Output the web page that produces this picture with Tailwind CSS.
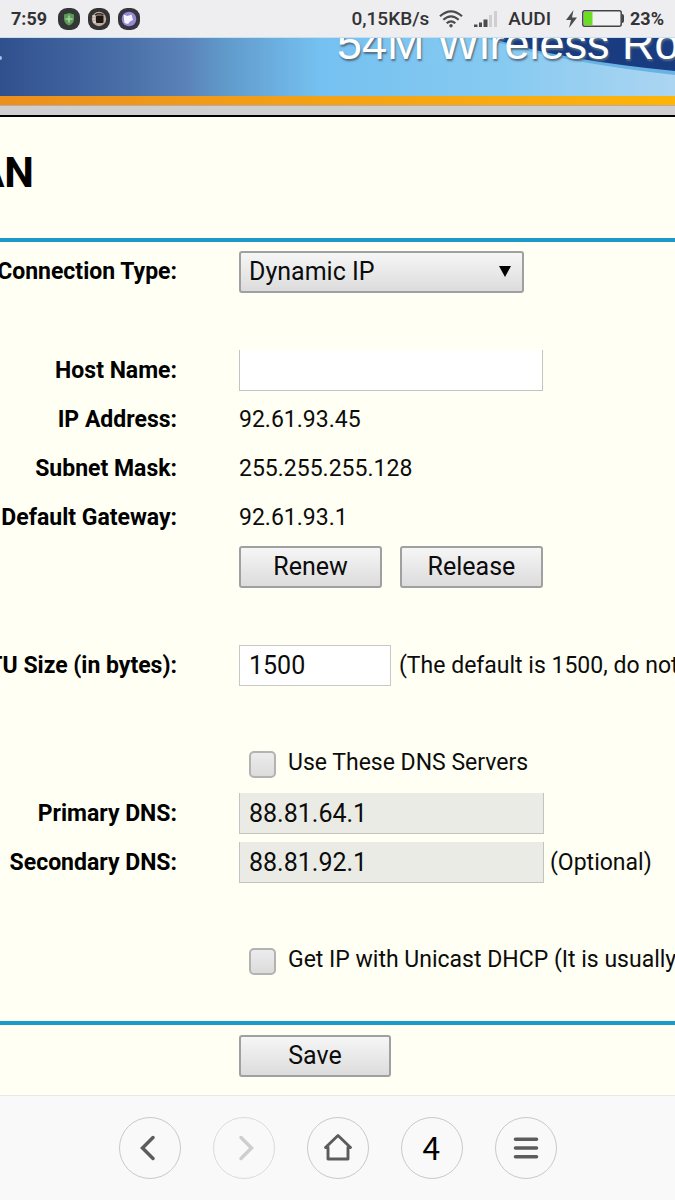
<!DOCTYPE html>
<html lang="en">
<head>
<meta charset="utf-8">
<meta name="viewport" content="width=device-width, initial-scale=1">
<title>WAN</title>
<script src="https://cdn.jsdelivr.net/npm/@tailwindcss/browser@4"></script>
</head>
<body class="flex min-h-screen flex-col overflow-x-hidden bg-[#fffff3] font-['Roboto',sans-serif] text-[23px] leading-7 text-[#0c0c0c]">

<!-- Status bar -->
<header class="flex h-[37px] shrink-0 items-center justify-between bg-[#eeeef0] px-[11px] text-[18px] font-bold text-[#333336]">
  <div class="flex items-center gap-2">
    <span class="w-[39px]">7:59</span>
    <svg class="size-[22px]" viewBox="0 0 22 22"><rect width="22" height="22" rx="9" fill="#333735"/><path d="M11 5L16 6.500V11C16 14 14 16.500 11 17.500C8 16.500 6 14 6 11V6.500Z" fill="#5a9a55"/><path d="M11 7.500V14.500M7.500 11H14.500" stroke="#a9d3a2" stroke-width="1.600"/></svg>
    <svg class="size-[22px]" viewBox="0 0 22 22"><rect width="22" height="22" rx="9" fill="#343334"/><circle cx="11" cy="11" r="7.200" fill="#bda9a0"/><rect x="8" y="7.500" width="7.500" height="7.500" rx="1" fill="#201713"/><path d="M7 7Q11 4.500 15.500 7" fill="none" stroke="#3a2b26" stroke-width="1.300"/><path d="M4 8H7M4.500 11H7M5 14H8" stroke="#eee7e3" stroke-width="1"/></svg>
    <svg class="size-[22px]" viewBox="0 0 22 22"><rect width="22" height="22" rx="9" fill="#36343f"/><circle cx="11" cy="11" r="7.300" fill="#9489d2"/><path d="M5.500 6.500L9.500 8L13.500 6.500L15 12L12 13.500L10 16L6.500 15Z" fill="#f5f3ff"/></svg>
  </div>
  <div class="flex items-center">
    <span class="text-[19px] font-medium">0,15KB/s</span>
    <svg class="ml-[10px] h-[18px] w-6" viewBox="0 0 24 18" fill="none" stroke="#4b4b4e" stroke-width="2.200"><path d="M1 6.200Q12-3.600 23 6.200M4.300 9.800Q12 2.800 19.700 9.800M7.700 13.300Q12 9.300 16.300 13.300"/><circle cx="12" cy="15.700" r="1.700" fill="#4b4b4e" stroke="none"/></svg>
    <svg class="ml-[11px] h-4 w-[23px]" viewBox="0 0 23 16"><path d="M0 13.500h3.500V16H0zM5 11.500h3V16H5zM9.500 8.500h4V16h-4z" fill="#4b4b4e"/><path d="M15 4h3v12h-3zM20 0h3v16h-3z" fill="#cfcfd2"/></svg>
    <span class="ml-[11px] text-[19px] font-medium">AUDI</span>
    <svg class="ml-[15px] h-[18px] w-[11px]" viewBox="0 0 11 18"><path d="M7.500 0L0 10H5L3 18L11 7.500H6Z" fill="#4b4b4e"/></svg>
    <svg class="ml-[5px] h-[17px] w-[42px]" viewBox="0 0 42 17"><rect x=".8" y=".8" width="38.400" height="15.400" rx="2" fill="#f2f2f4" stroke="#444447" stroke-width="1.500"/><rect x="2" y="2" width="8.500" height="13" fill="#6ade20"/><path d="M40 4Q42 4 42 6V11Q42 13 40 13Z" fill="#444447"/></svg>
    <span class="ml-[6px]">23%</span>
  </div>
</header>

<!-- Router banner -->
<div class="relative flex h-[59px] shrink-0 items-end overflow-hidden border-t border-[#c4dff2] bg-[linear-gradient(90deg,#30508d_0px,#466ba5_110px,#5b82b8_185px,#609acb_225px,#75c1f1_320px,#86caf1_500px,#acd5f1_675px)] pb-[30px] pl-[337px]">
  <svg class="absolute top-0 left-0 h-[59px] w-2" viewBox="0 0 8 59"><circle cx="0" cy="20" r="2" fill="#a5c5e8"/></svg>
  <svg class="absolute top-0 right-0 h-[59px] w-[190px]" viewBox="0 0 190 59"><path d="M0 0Q60 22 190 37V0Z" fill="#69b3e4"/><path d="M6 0Q70 21 190 33V0Z" fill="#193c80"/></svg>
  <p class="relative font-['Liberation_Sans',sans-serif] text-[45px] leading-[45px] whitespace-nowrap text-white [text-shadow:1px_2px_2px_#536a80]">54M Wireless Router</p>
</div>
<div class="h-[10px] shrink-0 border-b border-[#b5aca6] bg-linear-to-r from-[#ec8f1c] to-[#fdb506]"></div>
<div class="h-[11px] shrink-0 border-b-2 border-black bg-[#cfcfd1]"></div>

<main class="flex flex-col">
  <h1 class="flex h-[121px] w-[34px] items-start justify-end pt-8 text-[42px] leading-[48px] font-bold text-black">WAN</h1>

  <form class="flex flex-col">
    <div class="flex flex-col border-y-4 border-[#1b9bc9] pt-[5px] pb-[35px]">
      <div class="grid h-[49px] grid-cols-[177px_1fr] items-center gap-x-[62px]">
        <label for="type" class="flex justify-end font-bold whitespace-nowrap text-black">Connection Type:</label>
        <div class="relative w-[285px]">
          <select id="type" class="block h-[42px] w-full appearance-none rounded-[3px] border-2 border-[#a0a0a2] bg-linear-to-b from-[#f6f6f7] to-[#dcdcdd] pl-2 text-[25px] leading-7"><option>Dynamic IP</option></select>
          <svg class="pointer-events-none absolute top-[15px] right-[13px] h-[11px] w-3" viewBox="0 0 12 11"><path d="M0 0H12L6 11Z" fill="#000"/></svg>
        </div>
      </div>
      <div class="mt-[50px] grid h-[49px] grid-cols-[177px_1fr] items-center gap-x-[62px]">
        <label for="host" class="flex justify-end font-bold whitespace-nowrap text-black">Host Name:</label>
        <input id="host" type="text" class="h-[41px] w-[304px] border border-t-0 border-[#c3c3c3] bg-white px-[10px] text-[25px]">
      </div>
      <div class="grid h-[49px] grid-cols-[177px_1fr] items-center gap-x-[62px]">
        <span class="flex justify-end font-bold whitespace-nowrap text-black">IP Address:</span>
        <span>92.61.93.45</span>
      </div>
      <div class="grid h-[49px] grid-cols-[177px_1fr] items-center gap-x-[62px]">
        <span class="flex justify-end font-bold whitespace-nowrap text-black">Subnet Mask:</span>
        <span>255.255.255.128</span>
      </div>
      <div class="grid h-[49px] grid-cols-[177px_1fr] items-center gap-x-[62px]">
        <span class="flex justify-end font-bold whitespace-nowrap text-black">Default Gateway:</span>
        <span>92.61.93.1</span>
      </div>
      <div class="flex h-[49px] items-center gap-[18px] pl-[239px]">
        <button type="button" class="h-[42px] w-[143px] rounded-[3px] border-2 border-[#a0a0a2] bg-linear-to-b from-[#f6f6f7] to-[#dcdcdd] text-[25px] leading-7">Renew</button>
        <button type="button" class="h-[42px] w-[143px] rounded-[3px] border-2 border-[#a0a0a2] bg-linear-to-b from-[#f6f6f7] to-[#dcdcdd] text-[25px] leading-7">Release</button>
      </div>
      <div class="mt-[50px] grid h-[49px] grid-cols-[177px_1fr] items-center gap-x-[62px]">
        <label for="mtu" class="flex justify-end font-bold whitespace-nowrap text-black">MTU Size (in bytes):</label>
        <div class="flex items-center gap-2">
          <input id="mtu" type="text" value="1500" class="h-[41px] w-[152px] border border-[#c8c8c8] bg-white px-[9px] text-[25px]">
          <span class="whitespace-nowrap">(The default is 1500, do not</span>
        </div>
      </div>
      <div class="mt-[50px] flex h-[49px] items-center gap-3 pl-[249px]">
        <input id="dns" type="checkbox" class="size-[27px] appearance-none rounded-[5px] border-2 border-[#b3b3b4] bg-linear-to-b from-[#ececed] to-[#dcdcdd]">
        <label for="dns" class="pb-[3px] whitespace-nowrap">Use These DNS Servers</label>
      </div>
      <div class="grid h-[49px] grid-cols-[177px_1fr] items-center gap-x-[62px]">
        <label for="dns1" class="flex justify-end font-bold whitespace-nowrap text-black">Primary DNS:</label>
        <input id="dns1" type="text" value="88.81.64.1" disabled class="h-[41px] w-[305px] border border-t-0 border-[#c3c3c3] bg-[#ebebe6] px-[9px] text-[25px]">
      </div>
      <div class="grid h-[49px] grid-cols-[177px_1fr] items-center gap-x-[62px]">
        <label for="dns2" class="flex justify-end font-bold whitespace-nowrap text-black">Secondary DNS:</label>
        <div class="flex items-center gap-[6px]">
          <input id="dns2" type="text" value="88.81.92.1" disabled class="h-[41px] w-[305px] border border-t-0 border-[#c3c3c3] bg-[#ebebe6] px-[9px] text-[25px]">
          <span>(Optional)</span>
        </div>
      </div>
      <div class="mt-[50px] flex h-[49px] items-center gap-3 pl-[249px]">
        <input id="unicast" type="checkbox" class="size-[27px] shrink-0 appearance-none rounded-[5px] border-2 border-[#b3b3b4] bg-linear-to-b from-[#ececed] to-[#dcdcdd]">
        <label for="unicast" class="pb-[3px] whitespace-nowrap">Get IP with Unicast DHCP (It is usually</label>
      </div>
    </div>
    <div class="pt-[10px] pb-4 pl-[239px]">
      <button type="submit" class="block h-[42px] w-[152px] rounded-[3px] border-2 border-[#a0a0a2] bg-linear-to-b from-[#f6f6f7] to-[#dcdcdd] text-[25px] leading-7">Save</button>
    </div>
  </form>
</main>

<!-- Browser toolbar -->
<nav aria-label="Browser" class="mt-auto flex h-[105px] shrink-0 items-center justify-center gap-8 border-t border-[#e8e8e5] bg-[#f9f9f9]">
  <button type="button" aria-label="Back" class="grid size-[62px] place-items-center rounded-full border border-[#c9c9c9]"><svg class="size-[30px]" viewBox="0 0 30 30"><path d="M18 4.500L7.500 15L18 25.500" fill="none" stroke="#5c5c5c" stroke-width="3.500" stroke-linecap="round"/></svg></button>
  <button type="button" aria-label="Forward" disabled class="grid size-[62px] place-items-center rounded-full border border-[#dbdbdb]"><svg class="size-[30px]" viewBox="0 0 30 30"><path d="M12 4.500L22.500 15L12 25.500" fill="none" stroke="#cecece" stroke-width="3.500" stroke-linecap="round"/></svg></button>
  <button type="button" aria-label="Home" class="grid size-[62px] place-items-center rounded-full border border-[#c9c9c9]"><svg class="size-[30px]" viewBox="0 0 30 30"><path d="M2.500 14.500L15 2.500L27.500 14.500H25V26H5V14.500Z" fill="none" stroke="#5c5c5c" stroke-width="2.900" stroke-linejoin="round"/></svg></button>
  <button type="button" aria-label="Tabs: 4" class="grid size-[62px] place-items-center rounded-full border border-[#c9c9c9] pb-1 font-['Noto_Sans_CJK_SC',sans-serif] text-[32px] leading-8 text-black">4</button>
  <button type="button" aria-label="Menu" class="grid size-[62px] place-items-center rounded-full border border-[#c9c9c9]"><svg class="size-[30px]" viewBox="0 0 30 30"><path d="M4.500 6.300H25.500M4.500 15H25.500M4.500 23.700H25.500" stroke="#5c5c5c" stroke-width="3.600" stroke-linecap="round"/></svg></button>
</nav>
</body>
</html>
